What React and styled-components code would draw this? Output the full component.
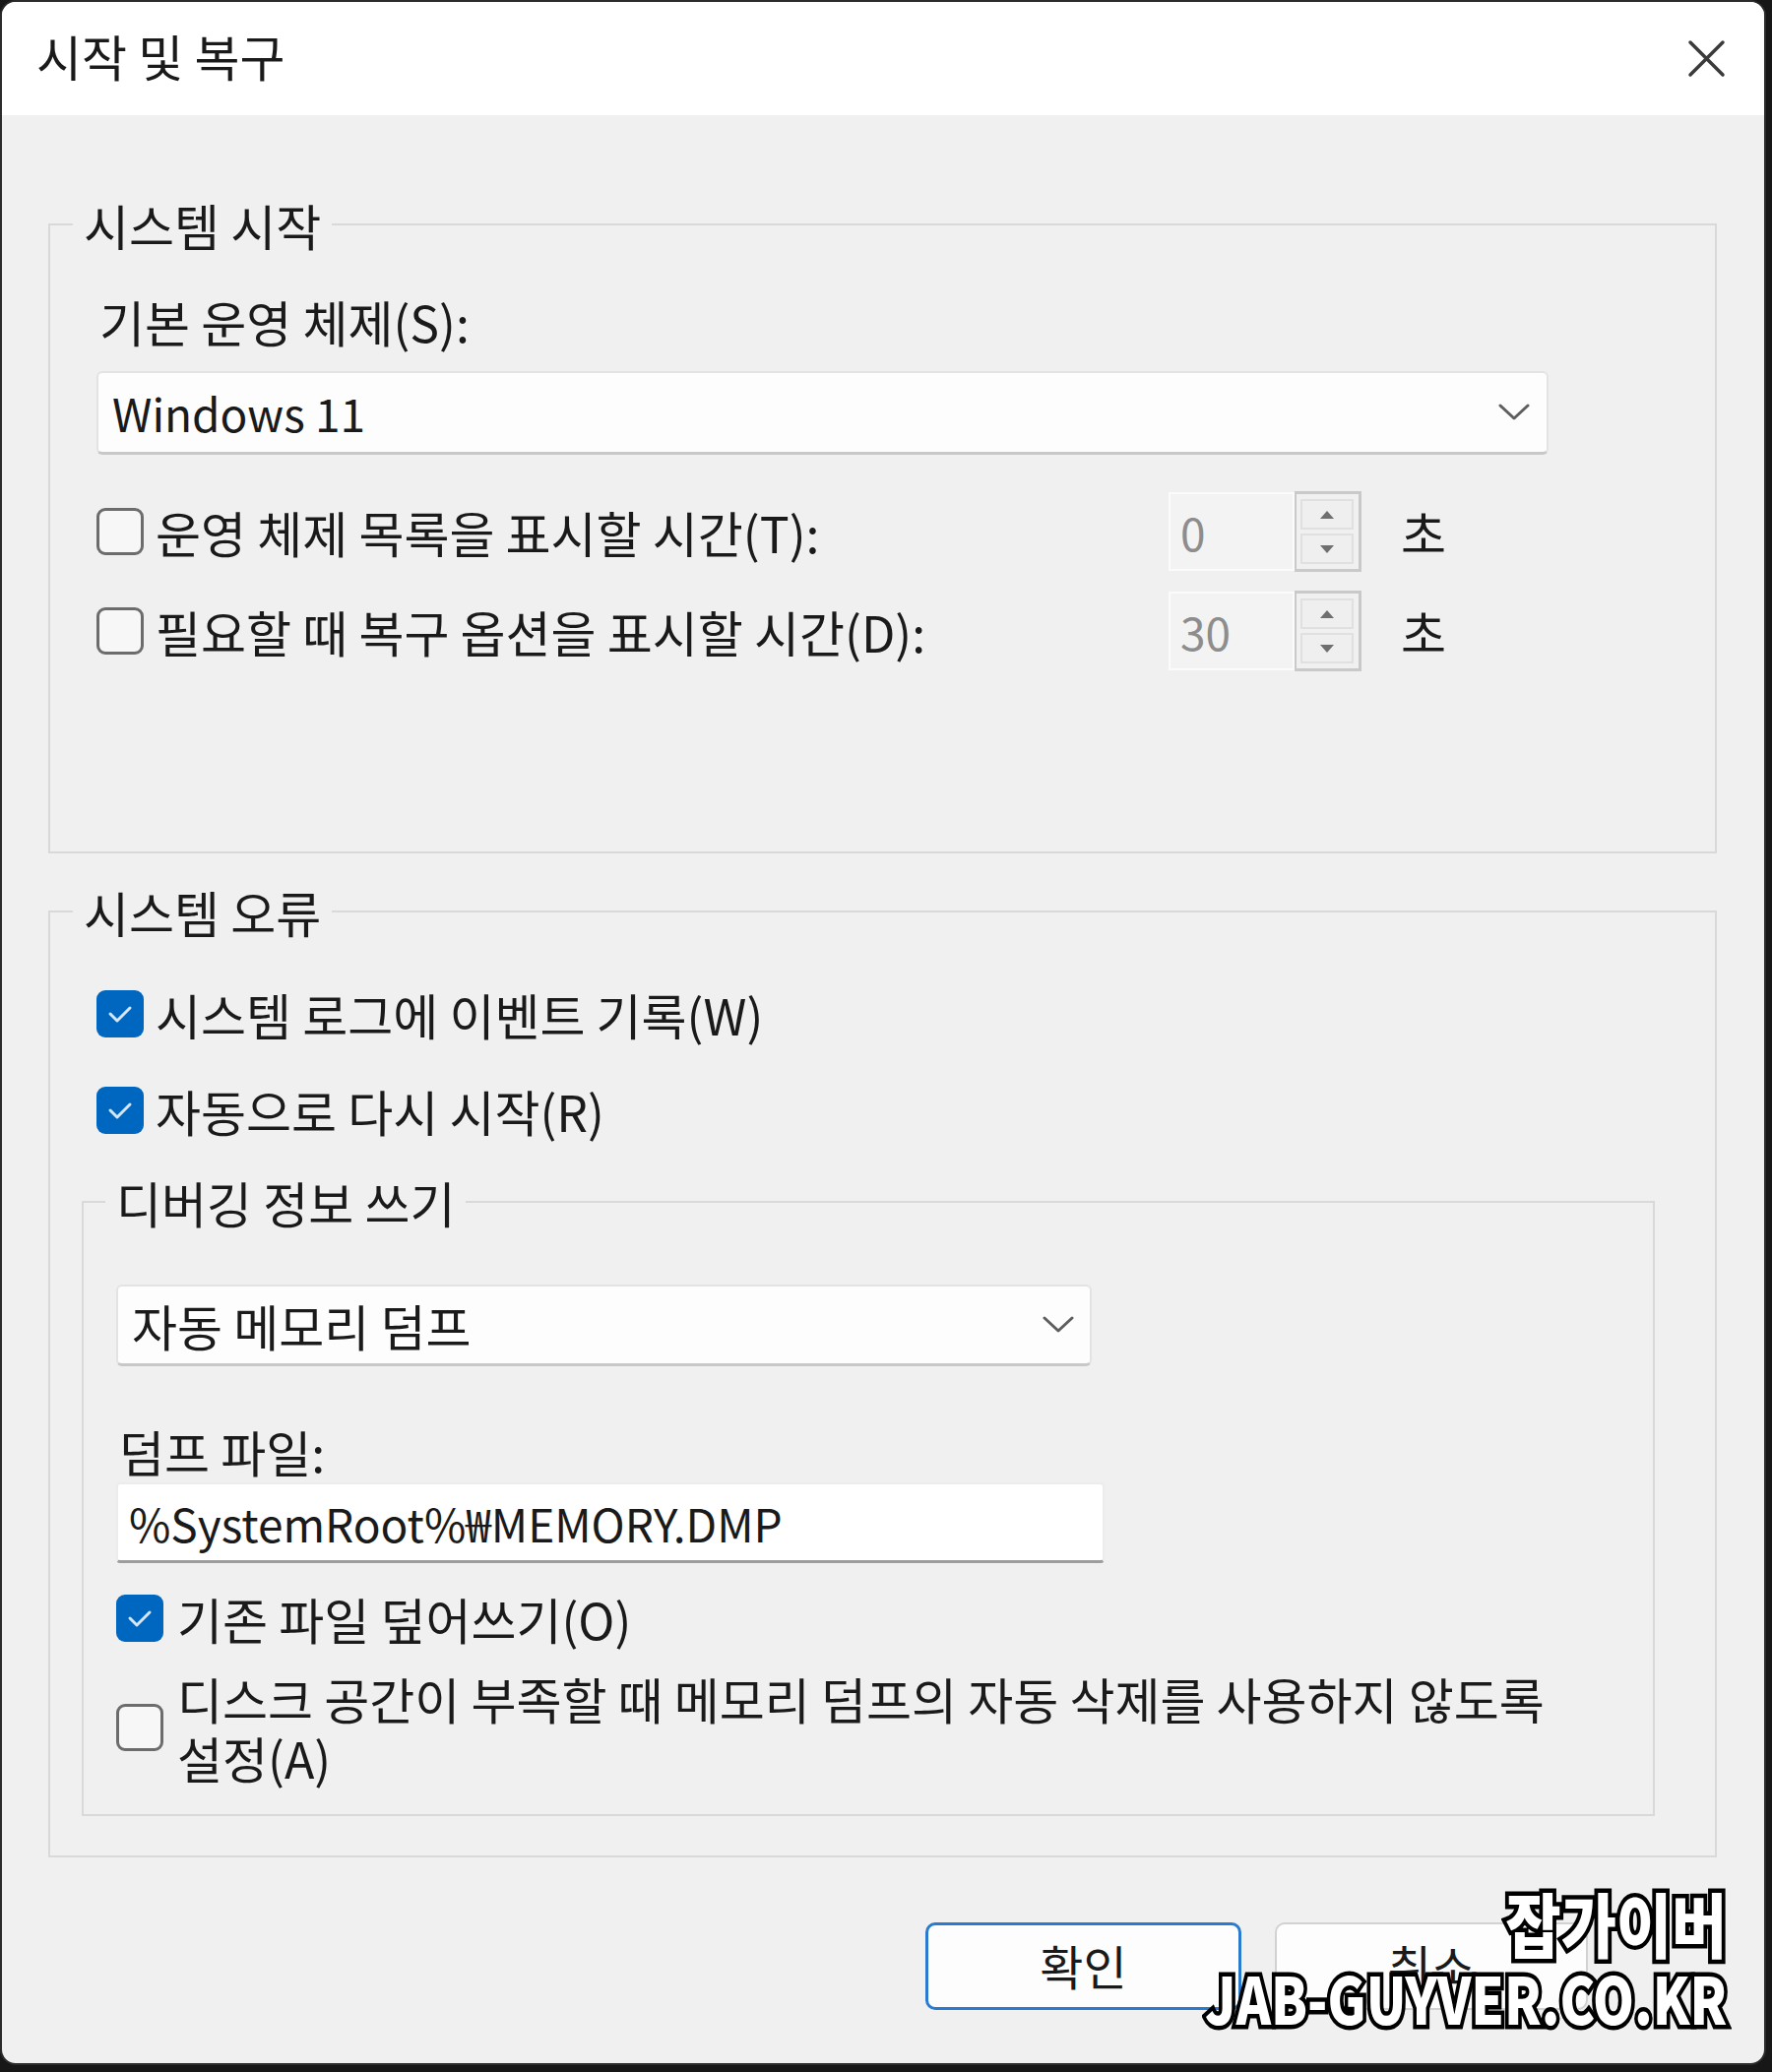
import React from "react";
import styled, { createGlobalStyle } from "styled-components";

const GlobalStyle = createGlobalStyle`
  html, body {
    margin: 0;
    padding: 0;
    background: #171717;
  }
  body {
    width: 1800px;
    height: 2105px;
    overflow: hidden;
    font-family: "Noto Sans CJK KR", "Noto Sans", sans-serif;
  }
`;

const Screen = styled.div`
  position: relative;
  width: 1800px;
  height: 2105px;
  background: #171717;
`;

const Window = styled.div`
  box-sizing: border-box;
  width: 1794px;
  height: 2098px;
  border: 2px solid #2c2c2c;
  border-radius: 16px;
  overflow: hidden;
  background: #f0f0f0;
  display: flex;
  flex-direction: column;
  color: #1a1a1a;
  font-size: 50px;
  line-height: 56px;
  word-break: keep-all;
`;

const TitleBar = styled.div`
  flex-shrink: 0;
  height: 115px;
  box-sizing: border-box;
  background: #ffffff;
  display: flex;
  align-items: center;
  justify-content: space-between;
  padding: 0 39px 7px 35px;
`;

const Title = styled.div`
  font-size: 50px;
`;

const CloseButton = styled.button`
  border: 0;
  padding: 0;
  background: none;
  width: 39px;
  height: 39px;
  display: flex;
  margin-top: 6px;
`;

const Body = styled.div`
  flex: 1;
  padding: 83px 48px 0 47px;
  display: flex;
  flex-direction: column;
`;

const Group = styled.fieldset`
  margin: ${(p) => p.$top || 0}px 0 0 0;
  padding: 0;
  border: 2px solid #d9d9d9;
  min-width: 0;
`;

const Legend = styled.legend`
  margin-left: ${(p) => p.$offset}px;
  padding: 0 11px;
  line-height: 56px;
`;

const GroupContent = styled.div`
  padding: ${(p) => p.$pad};
  display: flex;
  flex-direction: column;
`;

const FieldLabel = styled.div`
  margin: ${(p) => p.$top || 0}px 0 0 3px;
`;

const Select = styled.div`
  box-sizing: border-box;
  margin-top: ${(p) => p.$top || 0}px;
  width: ${(p) => (p.$width ? `${p.$width}px` : "auto")};
  height: ${(p) => p.$height}px;
  background: #fdfdfd;
  border: 2px solid #e3e3e3;
  border-bottom: 3px solid #c8c8c8;
  border-radius: 6px;
  display: flex;
  align-items: center;
  justify-content: space-between;
  padding: 0 ${(p) => p.$chevronPad}px 0 14px;
  font-size: ${(p) => p.$size}px;
`;

const TextInput = styled.div`
  box-sizing: border-box;
  margin-top: 4px;
  width: 1004px;
  height: 82px;
  background: #ffffff;
  border: 2px solid #ececec;
  border-bottom: 3px solid #9d9d9d;
  border-radius: 4px;
  display: flex;
  align-items: center;
  padding: 0 11px;
  font-size: 46px;
`;

const TimeRow = styled.div`
  margin-top: ${(p) => p.$top}px;
  height: 82px;
  display: grid;
  grid-template-columns: 1049px 196px auto;
  column-gap: 40px;
  align-items: center;
`;

const CheckRow = styled.label`
  display: flex;
  align-items: center;
  gap: ${(p) => p.$gap || 12}px;
  margin-top: ${(p) => p.$top || 0}px;
  margin-left: ${(p) => p.$indent || 0}px;
`;

const CheckText = styled.span`
  max-width: ${(p) => (p.$max ? `${p.$max}px` : "none")};
  line-height: ${(p) => p.$lh || 56}px;
`;

const Box = styled.span`
  box-sizing: border-box;
  flex-shrink: 0;
  width: 48px;
  height: 48px;
  border-radius: 9px;
  display: flex;
  align-items: center;
  justify-content: center;
  background: ${(p) => (p.$checked ? "#0067c0" : "#f7f7f7")};
  border: ${(p) => (p.$checked ? "none" : "3px solid #6c6c6c")};
`;

const SpinBox = styled.div`
  display: flex;
  height: 82px;
`;

const SpinField = styled.div`
  box-sizing: border-box;
  width: 128px;
  height: 80px;
  margin-top: 1px;
  background: #f3f3f3;
  border: 2px solid #fbfbfb;
  color: #8d8d8d;
  font-size: 46px;
  display: flex;
  align-items: center;
  padding-left: 10px;
`;

const SpinButtons = styled.div`
  box-sizing: border-box;
  width: 68px;
  height: 82px;
  border: 3px solid #c9c9c9;
  border-left-width: 2px;
  padding: 5px 5px 5px 4px;
  display: flex;
  flex-direction: column;
  gap: 4px;
`;

const SpinButton = styled.div`
  flex: 1;
  border: 2px solid #e0e0e0;
  background: #efefef;
  display: flex;
  align-items: center;
  justify-content: center;
`;

const Unit = styled.span``;

const Footer = styled.div`
  margin: 66px 131px 0 0;
  display: flex;
  justify-content: flex-end;
  gap: 34px;
`;

const DialogButton = styled.button`
  box-sizing: border-box;
  width: ${(p) => p.$width}px;
  height: 89px;
  border-radius: 10px;
  background: #fdfdfd;
  border: ${(p) => (p.$primary ? "3px solid #2a7bd0" : "2px solid #d2d2d2")};
  font-family: "Noto Sans CJK KR", "Noto Sans", sans-serif;
  font-size: 48px;
  color: #1a1a1a;
  padding: 0 0 4px 0;
`;

const Watermark = styled.div`
  position: absolute;
  top: 1913px;
  right: 46px;
  display: flex;
  flex-direction: column;
  align-items: flex-end;
  pointer-events: none;
`;

const MarkLine = styled.div`
  font-family: "Noto Sans CJK KR", "Noto Sans", sans-serif;
  font-weight: 900;
  font-size: ${(p) => p.$size}px;
  line-height: ${(p) => p.$lh}px;
  color: #ffffff;
  -webkit-text-stroke: 9px #000000;
  paint-order: stroke fill;
  transform: scaleX(${(p) => p.$squeeze});
  transform-origin: right center;
  white-space: nowrap;
`;

const CloseIcon = () => (
  <svg width="39" height="39" viewBox="0 0 39 39">
    <path d="M3 3 L36 36 M36 3 L3 36" stroke="#3a3a3a" strokeWidth="3.5" strokeLinecap="round" />
  </svg>
);

const Chevron = () => (
  <svg width="32" height="18" viewBox="0 0 32 18">
    <polyline points="2,2 16,15 30,2" fill="none" stroke="#5e5e5e" strokeWidth="3" strokeLinecap="round" strokeLinejoin="round" />
  </svg>
);

const Triangle = ({ down }) => (
  <svg width="16" height="10" viewBox="0 0 16 10">
    <polygon points={down ? "1,1 15,1 8,9" : "1,9 15,9 8,1"} fill="#6f6f6f" />
  </svg>
);

const Check = ({ checked }) => (
  <Box $checked={checked}>
    {checked && (
      <svg width="30" height="24" viewBox="0 0 30 24">
        <polyline points="5,12 12,19 25,6" fill="none" stroke="#d6e6f7" strokeWidth="3" strokeLinecap="round" strokeLinejoin="round" />
      </svg>
    )}
  </Box>
);

const Spinner = ({ value }) => (
  <SpinBox>
    <SpinField>{value}</SpinField>
    <SpinButtons>
      <SpinButton>
        <Triangle />
      </SpinButton>
      <SpinButton>
        <Triangle down />
      </SpinButton>
    </SpinButtons>
  </SpinBox>
);

export default function App() {
  return (
    <Screen>
      <GlobalStyle />
      <Window>
        <TitleBar>
          <Title>시작 및 복구</Title>
          <CloseButton aria-label="닫기">
            <CloseIcon />
          </CloseButton>
        </TitleBar>
        <Body>
          <Group>
            <Legend $offset={23}>시스템 시작</Legend>
            <GroupContent $pad="42px 169px 183px 47px">
              <FieldLabel>기본 운영 체제(S):</FieldLabel>
              <Select $top={23} $height={85} $chevronPad={17} $size={46}>
                <span>Windows 11</span>
                <Chevron />
              </Select>
              <TimeRow $top={37}>
                <CheckRow>
                  <Check />
                  <CheckText>운영 체제 목록을 표시할 시간(T):</CheckText>
                </CheckRow>
                <Spinner value="0" />
                <Unit>초</Unit>
              </TimeRow>
              <TimeRow $top={19}>
                <CheckRow>
                  <Check />
                  <CheckText>필요할 때 복구 옵션을 표시할 시간(D):</CheckText>
                </CheckRow>
                <Spinner value="30" />
                <Unit>초</Unit>
              </TimeRow>
            </GroupContent>
          </Group>

          <Group $top={31}>
            <Legend $offset={23}>시스템 오류</Legend>
            <GroupContent $pad="48px 61px 40px 32px">
              <CheckRow $indent={15}>
                <Check checked />
                <CheckText>시스템 로그에 이벤트 기록(W)</CheckText>
              </CheckRow>
              <CheckRow $indent={15} $top={42}>
                <Check checked />
                <CheckText>자동으로 다시 시작(R)</CheckText>
              </CheckRow>

              <Group $top={37}>
                <Legend $offset={22}>디버깅 정보 쓰기</Legend>
                <GroupContent $pad="56px 40px 28px 33px">
                  <Select $width={991} $height={83} $chevronPad={16} $size={50}>
                    <span>자동 메모리 덤프</span>
                    <Chevron />
                  </Select>
                  <FieldLabel $top={58}>덤프 파일:</FieldLabel>
                  <TextInput>%SystemRoot%₩MEMORY.DMP</TextInput>
                  <CheckRow $top={28} $gap={14}>
                    <Check checked />
                    <CheckText>기존 파일 덮어쓰기(O)</CheckText>
                  </CheckRow>
                  <CheckRow $top={23} $gap={14}>
                    <Check />
                    <CheckText $max={1420} $lh={60}>
                      디스크 공간이 부족할 때 메모리 덤프의 자동 삭제를 사용하지 않도록 설정(A)
                    </CheckText>
                  </CheckRow>
                </GroupContent>
              </Group>
            </GroupContent>
          </Group>

          <Footer>
            <DialogButton $primary $width={321}>확인</DialogButton>
            <DialogButton $width={318}>취소</DialogButton>
          </Footer>
        </Body>
      </Window>
      <Watermark>
        <MarkLine $size={71} $lh={79} $squeeze={0.86}>잡가이버</MarkLine>
        <MarkLine $size={66} $lh={72} $squeeze={0.81}>JAB-GUYVER.CO.KR</MarkLine>
      </Watermark>
    </Screen>
  );
}
